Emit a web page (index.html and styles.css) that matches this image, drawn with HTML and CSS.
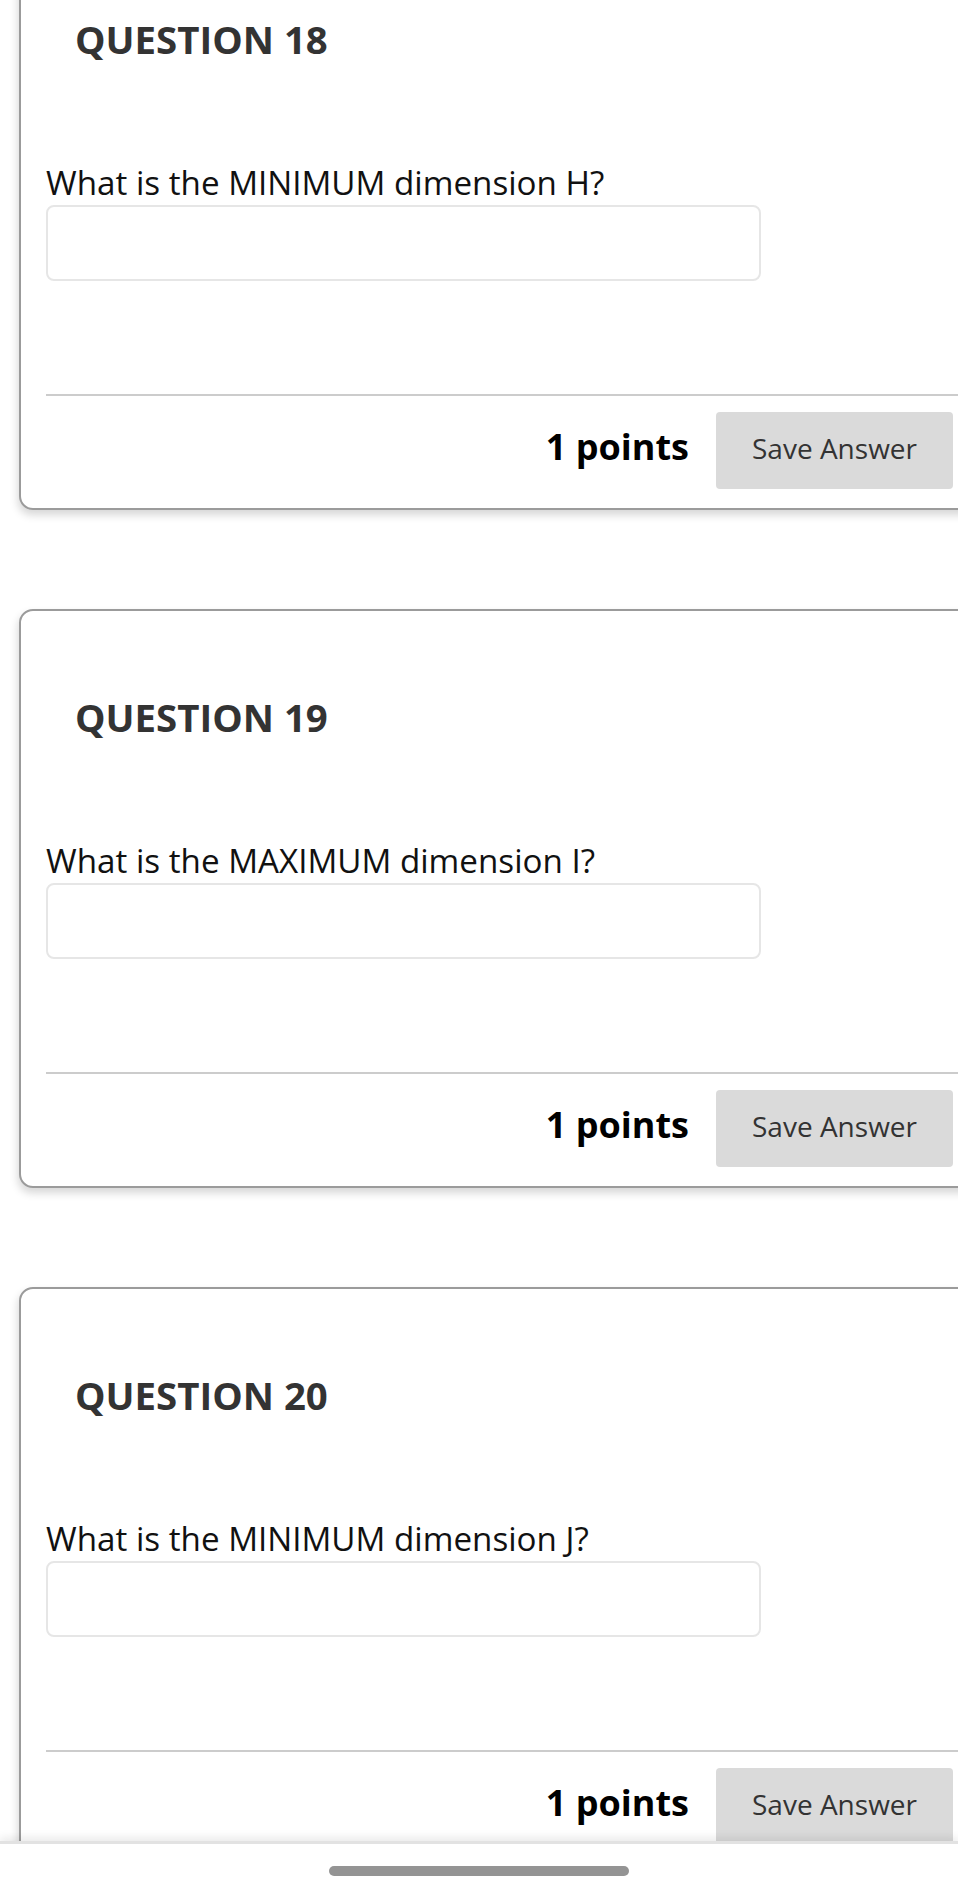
FILE: index.html
```html
<!DOCTYPE html>
<html lang="en">
<head>
    <meta charset="UTF-8">
    <meta name="viewport" content="width=device-width, initial-scale=1.0">
    <title>Test</title>
    <link rel="stylesheet" href="styles.css">
</head>
<body>
    <div class="questions">
        <div class="card">
            <h2 class="q-title">QUESTION 18</h2>
            <label class="q-text" for="ans18">What is the MINIMUM dimension H?</label>
            <input class="q-input" id="ans18" type="text">
            <div class="divider"></div>
            <div class="q-footer">
                <span class="points">1 points</span>
                <button class="save">Save Answer</button>
            </div>
        </div>

        <div class="card">
            <h2 class="q-title">QUESTION 19</h2>
            <label class="q-text" for="ans19">What is the MAXIMUM dimension I?</label>
            <input class="q-input" id="ans19" type="text">
            <div class="divider"></div>
            <div class="q-footer">
                <span class="points">1 points</span>
                <button class="save">Save Answer</button>
            </div>
        </div>

        <div class="card">
            <h2 class="q-title">QUESTION 20</h2>
            <label class="q-text" for="ans20">What is the MINIMUM dimension J?</label>
            <input class="q-input" id="ans20" type="text">
            <div class="divider"></div>
            <div class="q-footer">
                <span class="points">1 points</span>
                <button class="save">Save Answer</button>
            </div>
        </div>
    </div>

    <div class="home-bar">
        <div class="home-pill"></div>
    </div>
</body>
</html>
```

FILE: styles.css
```css
body {
    margin: 0;
    font-family: "Open Sans", "Noto Sans", Arial, sans-serif;
    background: #fff;
    overflow: hidden;
}
.questions {
    margin-top: -69px;
}
.card {
    box-sizing: border-box;
    width: 971px;
    margin: 0 0 99px 19px;
    padding: 80px 0 19px 25px;
    border: 2px solid #9b9b9b;
    border-radius: 14px;
    background: #fff;
    box-shadow: -1px 5px 8px rgba(0,0,0,0.16);
    display: flex;
    flex-direction: column;
    align-items: flex-start;
}
.q-title {
    margin: 0 0 95px 29px;
    font-size: 38.4px;
    font-weight: bold;
    color: #333;
    line-height: normal;
}
.q-text {
    font-size: 33.2px;
    color: #111;
    line-height: normal;
}
.q-input {
    box-sizing: border-box;
    width: 715px;
    height: 76px;
    margin: 0;
    border: 2px solid #e6e6e6;
    border-radius: 8px;
    background: #fff;
}
.divider {
    align-self: stretch;
    height: 2px;
    margin-top: 113px;
    background: #cccccc;
}
.q-footer {
    align-self: stretch;
    display: flex;
    justify-content: flex-end;
    align-items: center;
    gap: 27px;
    margin-top: 16px;
    padding-right: 35px;
}
.points {
    margin-bottom: 9px;
    font-size: 36px;
    font-weight: bold;
    color: #000;
}
.save {
    height: 77px;
    padding: 17px 36px 22px;
    border: none;
    border-radius: 4px;
    background-color: #dadada;
    color: #333;
    font-family: "Open Sans", "Noto Sans", Arial, sans-serif;
    font-size: 28px;
    line-height: normal;
    cursor: pointer;
}
.home-bar {
    position: fixed;
    left: 0;
    right: 0;
    bottom: 0;
    box-sizing: border-box;
    height: 47px;
    padding-top: 22px;
    border-top: 3px solid #e2e2e2;
    background: #fff;
    box-shadow: 0 -4px 8px rgba(0,0,0,0.08);
    display: flex;
    justify-content: center;
}
.home-pill {
    width: 300px;
    height: 10px;
    border-radius: 5px;
    background: #949494;
}
```
